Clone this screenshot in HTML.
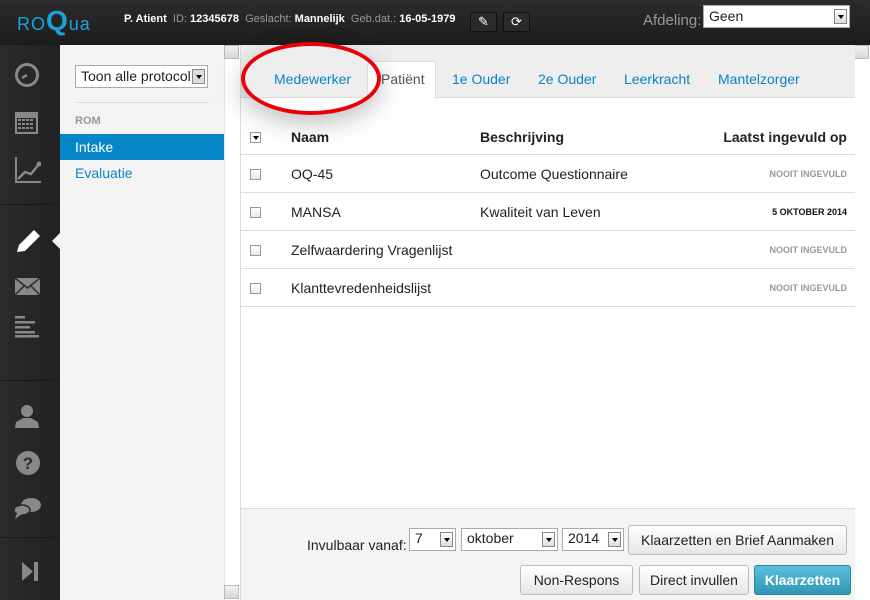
<!DOCTYPE html>
<html><head><meta charset="utf-8"><style>
*{box-sizing:border-box;margin:0;padding:0}
body{width:870px;height:600px;overflow:hidden;font-family:"Liberation Sans",sans-serif;background:#fff;position:relative}
.top{position:absolute;left:0;top:0;width:870px;height:45px;background:linear-gradient(#2c2c2c,#1c1c1c);color:#fff;font-size:11px}
.abs{position:absolute}
.left{position:absolute;left:0;top:45px;width:60px;height:555px;background:linear-gradient(90deg,#2a2a2a,#222);overflow:hidden}
.div{position:absolute;left:0;width:60px;height:1px;background:#444;border-bottom:1px solid #1a1a1a}
.side{position:absolute;left:60px;top:45px;width:164px;height:555px;background:#f4f4f4}
.sb{position:absolute;width:16px;background:#fff;border-left:1px solid #e3e3e3}
.arrow{position:absolute;width:15px;height:14px;background:linear-gradient(#f2f2f2,#d8d8d8);border:1px solid #bbb}
.main{position:absolute;left:240px;top:45px;width:614px;height:555px;border-left:1px solid #ddd;background:#fff}
.tabs{position:absolute;left:0;top:0;width:614px;height:53px;background:#eee;border-bottom:1px solid #ddd}
.tab{position:absolute;top:28px;font-size:14px;color:#0a84c8}
.row{position:absolute;left:0;width:614px;height:38px;border-bottom:1px solid #ddd;font-size:14px;color:#222}
.cb{position:absolute;left:9px;width:11px;height:11px;border:1px solid #999;background:linear-gradient(#fff,#e8e8e8)}
.st{position:absolute;right:8px;font-size:9px;font-weight:bold;color:#999}
.foot{position:absolute;left:0;top:463px;width:614px;height:92px;background:#f4f4f4;border-top:1px solid #ddd}
.sel{position:absolute;height:23px;background:#fff;border:1px solid #aaa;font-size:14px;padding:1px 5px;color:#222;overflow:hidden;white-space:nowrap}
.sel i{position:absolute;right:2px;top:3px;width:13px;height:15px;border:1px solid #888;background:linear-gradient(#fff,#ddd);box-shadow:0 0 0 2px #fff}
.sel i:after{content:"";position:absolute;left:3px;top:5px;border-left:3px solid transparent;border-right:3px solid transparent;border-top:4px solid #000}
.btn{position:absolute;height:30px;border:1px solid #bbb;border-radius:3px;background:linear-gradient(#fff,#e6e6e6);font-size:14px;color:#222;text-align:center;line-height:28px}
</style></head><body>
<div class="top">
 <div class="abs" style="left:17px;top:5px;font-size:18px;color:#19a3dc;letter-spacing:1px">RO<span style="font-size:28px;font-weight:bold">Q</span>ua</div>
 <div class="abs" style="left:124px;top:13px;white-space:nowrap"><b>P. Atient</b> &nbsp;<span style="color:#999">ID:</span> <b>12345678</b> &nbsp;<span style="color:#999">Geslacht:</span> <b>Mannelijk</b> &nbsp;<span style="color:#999">Geb.dat.:</span> <b>16-05-1979</b></div>
 <div class="abs" style="left:470px;top:12px;width:27px;height:20px;background:#2a2a2a;border:1px solid #111;border-radius:2px;color:#fff;font-size:13px;text-align:center;line-height:18px">✎</div>
 <div class="abs" style="left:503px;top:12px;width:27px;height:20px;background:#2a2a2a;border:1px solid #111;border-radius:2px;color:#fff;font-size:13px;text-align:center;line-height:18px">⟳</div>
 <div class="abs" style="left:643px;top:12px;font-size:15px;color:#999">Afdeling:</div>
 <div class="sel" style="left:703px;top:5px;width:147px;height:23px;padding:2px 5px"><span>Geen</span><i></i></div>
</div>
<div class="left">
 <div class="div" style="top:159px"></div><div class="div" style="top:335px"></div><div class="div" style="top:492px"></div>
 <svg class="abs" style="left:14px;top:17px" width="26" height="26"><circle cx="13" cy="13" r="10.5" fill="none" stroke="#888" stroke-width="3"/><path d="M13 13 L8 16" stroke="#888" stroke-width="2.5"/></svg>
 <svg class="abs" style="left:15px;top:64px" width="24" height="26"><rect x="0" y="3" width="23" height="22" fill="#888"/><g fill="#2a2a2a"><rect x="2" y="9" width="19" height="14"/></g><g fill="#888"><rect x="3" y="10" width="3" height="2"/><rect x="7" y="10" width="3" height="2"/><rect x="11" y="10" width="3" height="2"/><rect x="15" y="10" width="3" height="2"/><rect x="3" y="14" width="3" height="2"/><rect x="7" y="14" width="3" height="2"/><rect x="11" y="14" width="3" height="2"/><rect x="15" y="14" width="3" height="2"/><rect x="3" y="18" width="3" height="2"/><rect x="7" y="18" width="3" height="2"/><rect x="11" y="18" width="3" height="2"/><rect x="15" y="18" width="3" height="2"/></g></svg>
 <svg class="abs" style="left:15px;top:112px" width="26" height="26"><path d="M1 0V25H26" fill="none" stroke="#888" stroke-width="2"/><path d="M3 22 L10 15 L16 17 L24 7" fill="none" stroke="#888" stroke-width="2.5"/><circle cx="24" cy="7" r="2.5" fill="#888"/></svg>
 <svg class="abs" style="left:15px;top:184px" width="26" height="26"><path d="M2 23 L4 16 L19 1 L25 7 L10 22 Z" fill="#fff"/></svg>
 <div class="abs" style="left:52px;top:188px;border-top:8px solid transparent;border-bottom:8px solid transparent;border-right:8px solid #f4f4f4"></div>
 <svg class="abs" style="left:15px;top:233px" width="25" height="17"><rect width="25" height="17" fill="#888"/><path d="M0 0L12.5 10L25 0M0 17L9 8M25 17L16 8" stroke="#2a2a2a" stroke-width="1.5" fill="none"/></svg>
 <svg class="abs" style="left:15px;top:271px" width="25" height="22" fill="#888"><rect y="0" width="10" height="2.5"/><rect y="5" width="20" height="2.5"/><rect y="10" width="15" height="2.5"/><rect y="15" width="20" height="2.5"/><rect y="19" width="24" height="2.5"/></svg>
 <svg class="abs" style="left:15px;top:360px" width="24" height="24" fill="#888"><circle cx="12" cy="6" r="6"/><path d="M0 23 L1 17 L8 13 L16 13 L23 17 L24 23Z"/></svg>
 <svg class="abs" style="left:15px;top:405px" width="26" height="26"><circle cx="13" cy="13" r="12" fill="#888"/><text x="13" y="19" font-family="Liberation Sans" font-weight="bold" font-size="17" text-anchor="middle" fill="#2a2a2a">?</text></svg>
 <svg class="abs" style="left:14px;top:453px" width="28" height="22" fill="#888"><ellipse cx="17" cy="7" rx="10" ry="7"/><ellipse cx="8" cy="12" rx="8" ry="5" stroke="#2a2a2a" stroke-width="1.5"/><path d="M3 15 L1 21 L8 16Z"/></svg>
 <svg class="abs" style="left:22px;top:517px" width="16" height="19" fill="#888"><path d="M0 0 L11 9.5 L0 19Z"/><rect x="12" y="0" width="4" height="19"/></svg>
</div>
<div class="side">
 <div class="sel" style="left:15px;top:20px;width:133px;height:23px;padding:2px 5px;font-size:14px"><span>Toon alle protocollen</span><i style="background:#ddd"></i></div>
 <div class="abs" style="left:15px;top:57px;width:134px;height:1px;background:#ddd"></div>
 <div class="abs" style="left:15px;top:70px;font-size:11px;font-weight:bold;color:#999">ROM</div>
 <div class="abs" style="left:0;top:89px;width:164px;height:26px;background:#0786c8;color:#fff;font-size:14px;padding:5px 15px">Intake</div>
 <div class="abs" style="left:15px;top:120px;font-size:14px;color:#0a84c8">Evaluatie</div>
</div>
<div class="sb" style="left:224px;top:45px;height:555px"></div>
<div class="arrow" style="left:224px;top:45px"></div>
<div class="arrow" style="left:224px;top:585px"></div>
<div class="sb" style="left:854px;top:45px;height:555px;border-left:none"></div>
<div class="arrow" style="left:854px;top:45px"></div>
<div class="main">
 <div class="tabs">
  <div class="abs" style="left:126px;top:16px;width:69px;height:38px;background:#fff;border:1px solid #ddd;border-bottom:none;border-radius:3px 3px 0 0"></div>
  <div class="tab" style="left:33px;top:26px">Medewerker</div>
  <div class="tab" style="left:140px;top:26px;color:#555">Patiënt</div>
  <div class="tab" style="left:211px;top:26px">1e Ouder</div>
  <div class="tab" style="left:297px;top:26px">2e Ouder</div>
  <div class="tab" style="left:383px;top:26px">Leerkracht</div>
  <div class="tab" style="left:477px;top:26px">Mantelzorger</div>
 </div>
 <div class="row" style="top:73px;height:37px;font-weight:bold"><div class="cb" style="top:14px;background:#fff"><div style="position:absolute;left:2px;top:3px;border-left:3px solid transparent;border-right:3px solid transparent;border-top:4px solid #000"></div></div><span class="abs" style="left:50px;top:11px">Naam</span><span class="abs" style="left:239px;top:11px">Beschrijving</span><span class="abs" style="right:8px;top:11px">Laatst ingevuld op</span></div>
 <div class="row" style="top:110px"><div class="cb" style="top:14px"></div><span class="abs" style="left:50px;top:11px">OQ-45</span><span class="abs" style="left:239px;top:11px">Outcome Questionnaire</span><span class="st" style="top:14px">NOOIT INGEVULD</span></div>
 <div class="row" style="top:148px"><div class="cb" style="top:14px"></div><span class="abs" style="left:50px;top:11px">MANSA</span><span class="abs" style="left:239px;top:11px">Kwaliteit van Leven</span><span class="st" style="top:14px;color:#111">5 OKTOBER 2014</span></div>
 <div class="row" style="top:186px"><div class="cb" style="top:14px"></div><span class="abs" style="left:50px;top:11px">Zelfwaardering Vragenlijst</span><span class="st" style="top:14px">NOOIT INGEVULD</span></div>
 <div class="row" style="top:224px"><div class="cb" style="top:14px"></div><span class="abs" style="left:50px;top:11px">Klanttevredenheidslijst</span><span class="st" style="top:14px">NOOIT INGEVULD</span></div>
 <div class="foot">
  <span class="abs" style="left:66px;top:28px;font-size:14px;color:#222">Invulbaar vanaf:</span>
  <div class="sel" style="left:168px;top:19px;width:47px"><span>7</span><i></i></div>
  <div class="sel" style="left:220px;top:19px;width:97px"><span>oktober</span><i></i></div>
  <div class="sel" style="left:321px;top:19px;width:62px"><span>2014</span><i></i></div>
  <div class="btn" style="left:387px;top:16px;width:219px">Klaarzetten en Brief Aanmaken</div>
  <div class="btn" style="left:279px;top:56px;width:113px">Non-Respons</div>
  <div class="btn" style="left:398px;top:56px;width:110px">Direct invullen</div>
  <div class="btn" style="left:513px;top:56px;width:97px;background:linear-gradient(#5bc0de,#2f96b4);border-color:#2a85a0;color:#fff;font-weight:bold">Klaarzetten</div>
 </div>
</div>
<div class="abs" style="left:241px;top:42px;width:140px;height:73px;border:4px solid #e8000b;border-radius:50%;box-shadow:0 8px 25px rgba(0,0,0,.25)"></div>
</body></html>
